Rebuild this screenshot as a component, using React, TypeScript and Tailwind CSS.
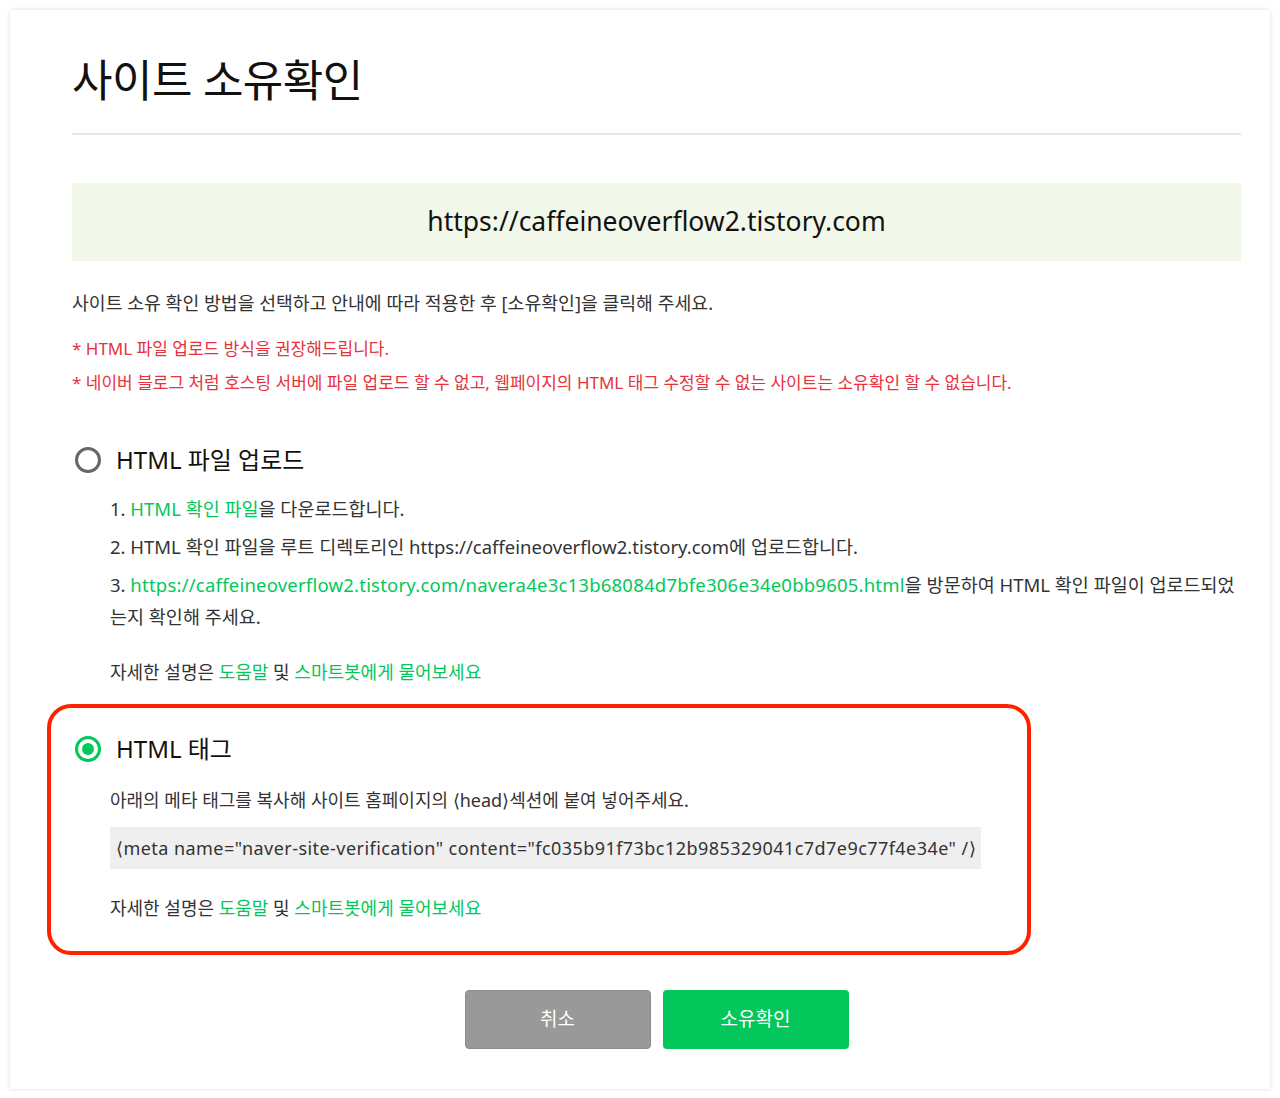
import React from 'react';

const font = { fontFamily: '"Noto Sans", "Noto Sans CJK KR", sans-serif' };

const Radio: React.FC<{ checked?: boolean }> = ({ checked }) =>
  checked ? (
    <span className="flex h-[26px] w-[26px] shrink-0 items-center justify-center rounded-full border-[3px] border-[#03c75a]">
      <span className="h-[12px] w-[12px] rounded-full bg-[#03c75a]" />
    </span>
  ) : (
    <span className="h-[26px] w-[26px] shrink-0 rounded-full border-[3px] border-[#666]" />
  );

const HelpLine: React.FC = () => (
  <p className="text-[18px] leading-[28px] text-[#333]">
    자세한 설명은 <a className="text-[#03c75a]">도움말</a> 및{' '}
    <a className="text-[#03c75a]">스마트봇에게 물어보세요</a>
  </p>
);

const App: React.FC = () => {
  return (
    <div className="min-h-screen bg-white p-[10px]" style={font}>
      <div className="bg-white pl-[62px] pr-[29px] pt-[40px] pb-[40px] shadow-[0_0_4px_rgba(0,0,0,0.15)]">
        <h1 className="text-[44px] leading-[60px] font-normal tracking-[-0.5px] text-[#111]">사이트 소유확인</h1>
        <div className="mt-[23px] border-b-2 border-[#e6e6e6]" />

        <div className="mt-[48px] flex h-[78px] items-center justify-center bg-[#f1f7e9] text-[26.5px] text-[#111]">
          https://caffeineoverflow2.tistory.com
        </div>

        <p className="mt-[28px] text-[18.3px] leading-[28px] text-[#333]">
          사이트 소유 확인 방법을 선택하고 안내에 따라 적용한 후 [소유확인]을 클릭해 주세요.
        </p>
        <div className="mt-[15px] text-[17px] leading-[34px] text-[#e8323c]">
          <p>* HTML 파일 업로드 방식을 권장해드립니다.</p>
          <p>* 네이버 블로그 처럼 호스팅 서버에 파일 업로드 할 수 없고, 웹페이지의 HTML 태그 수정할 수 없는 사이트는 소유확인 할 수 없습니다.</p>
        </div>

        <section className="mt-[40px]">
          <div className="flex items-center gap-[15px] pl-[3px]">
            <Radio />
            <span className="text-[24px] leading-[40px] text-[#111]">HTML 파일 업로드</span>
          </div>
          <ol className="mt-[13px] pl-[38px] text-[18.5px] leading-[32px] text-[#333]">
            <li>
              1. <a className="text-[#03c75a]">HTML 확인 파일</a>을 다운로드합니다.
            </li>
            <li className="mt-[6px]">
              2. HTML 확인 파일을 루트 디렉토리인 https://caffeineoverflow2.tistory.com에 업로드합니다.
            </li>
            <li className="mt-[6px]">
              3.{' '}
              <a className="tracking-[0.22px] text-[#03c75a]">
                https://caffeineoverflow2.tistory.com/navera4e3c13b68084d7bfe306e34e0bb9605.html
              </a>
              을 방문하여 HTML 확인 파일이 업로드되었는지 확인해 주세요.
            </li>
          </ol>
          <div className="mt-[25px] pl-[38px]">
            <HelpLine />
          </div>
        </section>

        <section className="mt-[18px] -ml-[25px] w-[984px] rounded-[24px] border-4 border-[#ff2200] pl-[24px] pt-[21px] pb-[29px]">
          <div className="flex items-center gap-[15px]">
            <Radio checked />
            <span className="text-[24px] leading-[40px] text-[#111]">HTML 태그</span>
          </div>
          <div className="pl-[35px]">
            <p className="mt-[17px] text-[18px] leading-[28px] text-[#333]">
              아래의 메타 태그를 복사해 사이트 홈페이지의 ⟨head⟩섹션에 붙여 넣어주세요.
            </p>
            <div className="mt-[13px] flex h-[42px] w-[871px] items-center bg-[#efefef] pl-[6px] text-[18px] tracking-[0.45px] text-[#333]">
              ⟨meta name="naver-site-verification" content="fc035b91f73bc12b985329041c7d7e9c77f4e34e" /⟩
            </div>
            <div className="mt-[25px]">
              <HelpLine />
            </div>
          </div>
        </section>

        <div className="mt-[35px] flex justify-center gap-[12px]">
          <button className="h-[59px] w-[186px] rounded-[4px] border border-[#8c8c8c] bg-[#999] text-[19px] text-white">
            취소
          </button>
          <button className="h-[59px] w-[186px] rounded-[4px] bg-[#03c75a] text-[19px] text-white">
            소유확인
          </button>
        </div>
      </div>
    </div>
  );
};

export default App;
